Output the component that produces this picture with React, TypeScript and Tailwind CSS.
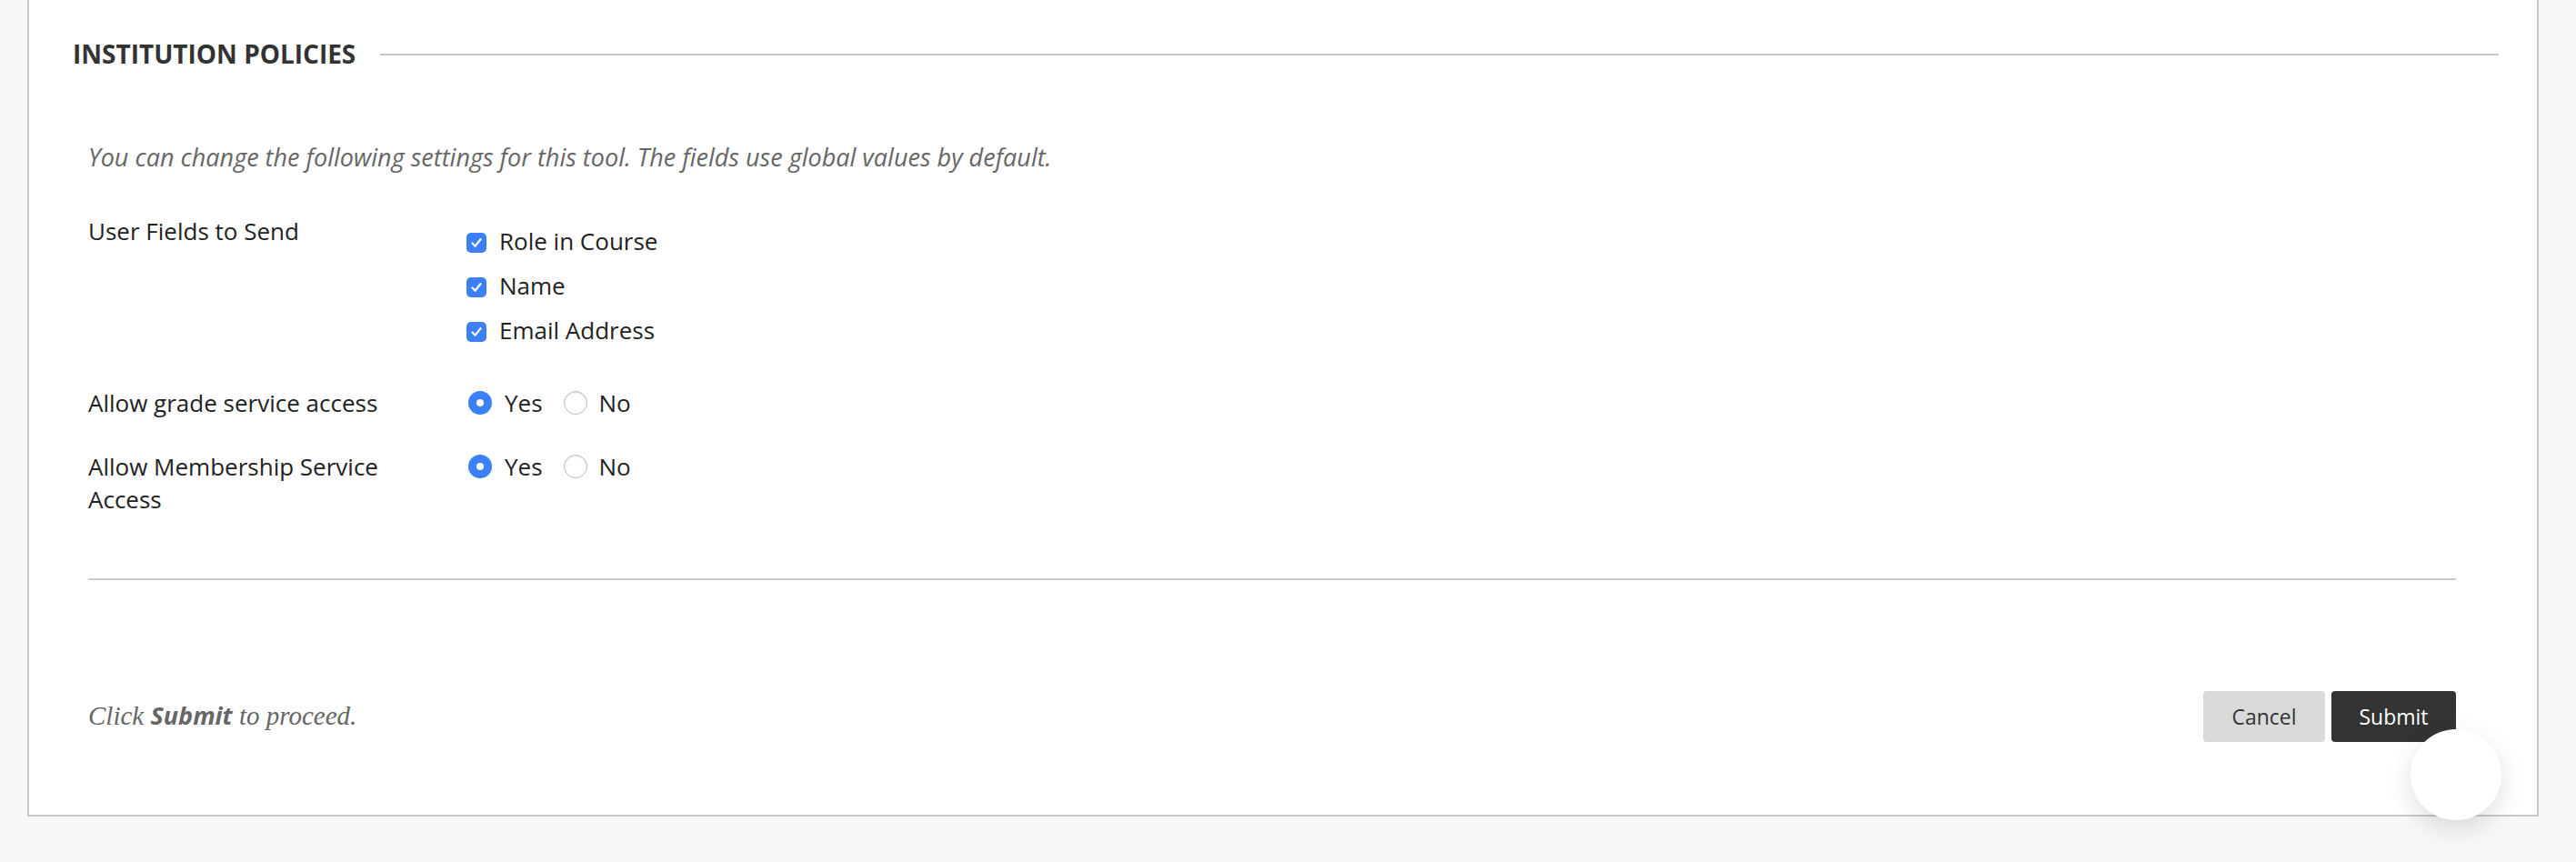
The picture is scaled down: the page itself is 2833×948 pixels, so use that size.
import { useState } from 'react'

function Checkbox({ label, checked, onToggle }: { label: string; checked: boolean; onToggle: () => void }) {
  return (
    <label className="flex h-[36px] cursor-pointer items-center" onClick={onToggle}>
      <span
        className={`flex h-[22px] w-[22px] translate-y-[2px] items-center justify-center rounded-[5px] ${
          checked ? 'bg-[#3b80f6]' : 'border border-[#b5b5b5] bg-white'
        }`}
      >
        {checked && (
          <svg width="14" height="14" viewBox="0 0 14 14" fill="none">
            <path d="M2.5 7.5 L5.6 10.6 L11.5 3.2" stroke="white" strokeWidth="2.2" strokeLinecap="round" strokeLinejoin="round" />
          </svg>
        )}
      </span>
      <span className="ml-[14px] text-[26px] leading-[36px] text-[#222]">{label}</span>
    </label>
  )
}

function Radio({ checked, onSelect }: { checked: boolean; onSelect: () => void }) {
  return (
    <span
      onClick={onSelect}
      className={`flex h-[26px] w-[26px] shrink-0 cursor-pointer items-center justify-center rounded-full ${
        checked ? 'bg-[#3b80f6]' : 'border border-[#bdbdbd] bg-white shadow-[inset_0_1px_2px_rgba(0,0,0,0.12)]'
      }`}
    >
      {checked && <span className="h-[8px] w-[8px] rounded-full bg-white" />}
    </span>
  )
}

function YesNo({ value, onChange }: { value: boolean; onChange: (v: boolean) => void }) {
  return (
    <div className="ml-[2px] flex h-[36px] items-center text-[26px] leading-[36px] text-[#222]">
      <Radio checked={value} onSelect={() => onChange(true)} />
      <span className="ml-[14px]">Yes</span>
      <span className="ml-[23px]">
        <Radio checked={!value} onSelect={() => onChange(false)} />
      </span>
      <span className="ml-[13px]">No</span>
    </div>
  )
}

export default function App() {
  const [fields, setFields] = useState({ role: true, name: true, email: true })
  const [grade, setGrade] = useState(true)
  const [membership, setMembership] = useState(true)

  return (
    <div className="relative min-h-[948px] bg-[#f8f8f8] font-['Open_Sans',sans-serif]">
      <div className="ml-[30px] w-[2762px] border-x-2 border-b-2 border-[#c9c9c9] bg-white">
        {/* Section title */}
        <div className="flex items-center gap-[27px] pl-[48px] pr-[42px] pt-[39px]">
          <h2 className="text-[28px] font-bold uppercase leading-[40px] text-[#333]">Institution Policies</h2>
          <div className="mt-[2px] h-[2px] flex-1 bg-[#c8c8c8]" />
        </div>

        <div className="pb-[80px] pl-[65px] pr-[89px]">
          <p className="mt-[76px] text-[27px] italic leading-[36px] text-[#666]">
            You can change the following settings for this tool. The fields use global values by default.
          </p>

          {/* User fields */}
          <div className="mt-[45px] flex">
            <div className="w-[416px] shrink-0 pr-[40px] text-[26px] leading-[36px] text-[#222]">User Fields to Send</div>
            <div className="flex flex-col gap-[13px] pt-[11px]">
              <Checkbox label="Role in Course" checked={fields.role} onToggle={() => setFields({ ...fields, role: !fields.role })} />
              <Checkbox label="Name" checked={fields.name} onToggle={() => setFields({ ...fields, name: !fields.name })} />
              <Checkbox label="Email Address" checked={fields.email} onToggle={() => setFields({ ...fields, email: !fields.email })} />
            </div>
          </div>

          <div className="mt-[44px] flex">
            <div className="w-[416px] shrink-0 pr-[40px] text-[26px] leading-[36px] text-[#222]">Allow grade service access</div>
            <YesNo value={grade} onChange={setGrade} />
          </div>

          <div className="mt-[34px] flex">
            <div className="w-[416px] shrink-0 pr-[40px] text-[26px] leading-[36px] text-[#222]">Allow Membership Service Access</div>
            <YesNo value={membership} onChange={setMembership} />
          </div>

          <div className="mt-[69px] h-[2px] bg-[#cccccc]" />

          {/* Footer */}
          <div className="mt-[122px] flex h-[56px] items-center justify-between">
            <p className="font-['Liberation_Serif',serif] text-[29px] italic text-[#666]">
              Click <span className="font-['Open_Sans',sans-serif] text-[27px] font-bold">Submit</span> to proceed.
            </p>
            <div className="flex gap-[7px]">
              <button className="h-[56px] w-[134px] rounded-[4px] bg-[#dadada] text-[23px] text-[#333]">Cancel</button>
              <button className="h-[56px] w-[137px] rounded-[4px] bg-[#333333] text-[23px] text-white">Submit</button>
            </div>
          </div>
        </div>
      </div>

      <div className="absolute left-[2651px] top-[802px] h-[100px] w-[100px] rounded-full bg-white shadow-[0_10px_28px_rgba(0,0,0,0.13)]" />
    </div>
  )
}
